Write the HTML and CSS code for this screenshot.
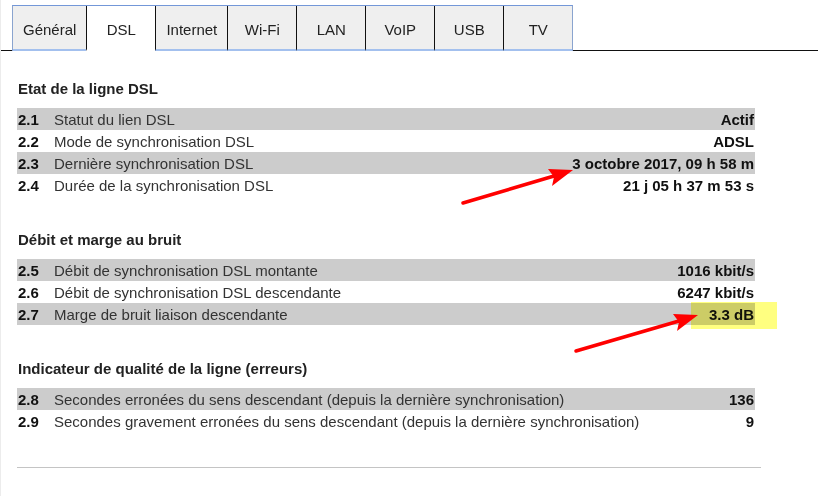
FILE: index.html
```html
<!DOCTYPE html>
<html lang="fr">
<head>
<meta charset="utf-8">
<title>DSL</title>
<link rel="stylesheet" href="styles.css">
</head>
<body>
<div class="page">
  <nav class="tabs">
    <div class="tab-gap left"></div>
    <div class="tab-strip">
      <div class="tab">Général</div>
      <div class="tab active">DSL</div>
      <div class="tab">Internet</div>
      <div class="tab">Wi-Fi</div>
      <div class="tab">LAN</div>
      <div class="tab">VoIP</div>
      <div class="tab">USB</div>
      <div class="tab">TV</div>
    </div>
    <div class="tab-gap right"></div>
  </nav>

  <main class="content">
    <section class="group">
      <h2 class="group-title">Etat de la ligne DSL</h2>
      <div class="row odd"><span class="num">2.1</span><span class="label">Statut du lien DSL</span><span class="value">Actif</span></div>
      <div class="row"><span class="num">2.2</span><span class="label">Mode de synchronisation DSL</span><span class="value">ADSL</span></div>
      <div class="row odd"><span class="num">2.3</span><span class="label">Dernière synchronisation DSL</span><span class="value">3 octobre 2017, 09 h 58 m</span></div>
      <div class="row"><span class="num">2.4</span><span class="label">Durée de la synchronisation DSL</span><span class="value">21 j 05 h 37 m 53 s</span></div>
    </section>

    <section class="group">
      <h2 class="group-title">Débit et marge au bruit</h2>
      <div class="row odd"><span class="num">2.5</span><span class="label">Débit de synchronisation DSL montante</span><span class="value">1016 kbit/s</span></div>
      <div class="row"><span class="num">2.6</span><span class="label">Débit de synchronisation DSL descendante</span><span class="value">6247 kbit/s</span></div>
      <div class="row odd"><span class="num">2.7</span><span class="label">Marge de bruit liaison descendante</span><span class="value">3.3 dB</span></div>
    </section>

    <section class="group">
      <h2 class="group-title">Indicateur de qualité de la ligne (erreurs)</h2>
      <div class="row odd"><span class="num">2.8</span><span class="label">Secondes erronées du sens descendant (depuis la dernière synchronisation)</span><span class="value">136</span></div>
      <div class="row"><span class="num">2.9</span><span class="label">Secondes gravement erronées du sens descendant (depuis la dernière synchronisation)</span><span class="value">9</span></div>
    </section>

    <hr class="rule">
  </main>

  <div class="highlight"></div>

  <svg class="arrows" width="818" height="496" viewBox="0 0 818 496">
    <line x1="462" y1="203" x2="553" y2="176" stroke="#ff0000" stroke-width="3.5" stroke-linecap="round"/>
    <polygon points="572,170 551,186 553,177 547,169" fill="#ff0000"/>
    <line x1="575" y1="351" x2="678" y2="321" stroke="#ff0000" stroke-width="3.5" stroke-linecap="round"/>
    <polygon points="697,315 676,331 678,322 672,314" fill="#ff0000"/>
  </svg>
</div>
</body>
</html>
```

FILE: styles.css
```css
* { box-sizing: border-box; }

html, body {
  margin: 0;
  padding: 0;
  background: #ffffff;
}

body {
  font-family: "Liberation Sans", Arial, sans-serif;
  font-size: 15px;
  color: #333333;
}

.page {
  position: relative;
  width: 818px;
  height: 496px;
  overflow: hidden;
  border-left: 1px solid #ececec;
}

/* Tabs */
.tabs {
  display: flex;
  align-items: flex-end;
  padding-top: 5px;
}

.tab-gap {
  height: 1px;
  border-bottom: 1px solid #111111;
  margin-bottom: 0;
}
.tab-gap.left { width: 11px; }
.tab-gap.right { flex: 1; }

.tab-strip {
  display: flex;
  border-top: 1px solid #7397d8;
  border-left: 1px solid #8aa4cf;
  border-right: 1px solid #8aa4cf;
}

.tab {
  min-width: 69px;
  height: 45px;
  padding: 4px 10px 0;
  display: flex;
  align-items: center;
  justify-content: center;
  background: #efefef;
  color: #222222;
  border-left: 1px solid #111111;
  border-bottom: 2px solid #a3c0ee;
  font-size: 15px;
}
.tab:first-child {
  border-left: none;
  min-width: 73px;
}
.tab.active {
  background: #ffffff;
  border-bottom-color: #ffffff;
}

/* Content */
.content {
  padding: 27px 0 0 16px;
  width: 760px;
}

.group {
  width: 738px;
  margin-bottom: 33px;
}

.group-title {
  margin: 0 0 8px;
  height: 22px;
  line-height: 22px;
  font-size: 15px;
  font-weight: bold;
  color: #222222;
  padding-left: 1px;
}

.row {
  display: flex;
  align-items: center;
  height: 22px;
  padding: 0 1px;
}
.row.odd { background: #cccccc; }

.num {
  width: 36px;
  font-weight: bold;
  color: #111111;
  flex: none;
}

.label {
  flex: 1;
  color: #333333;
  white-space: nowrap;
}

.value {
  font-weight: bold;
  color: #111111;
  white-space: nowrap;
}

.rule {
  margin: 35px 0 0;
  width: 744px;
  border: none;
  border-top: 1px solid #c4c4c4;
  height: 0;
}

/* Overlays */
.highlight {
  position: absolute;
  left: 690px;
  top: 302px;
  width: 86px;
  height: 27px;
  background: #ffff80;
  mix-blend-mode: multiply;
}

.arrows {
  position: absolute;
  left: 0;
  top: 0;
  pointer-events: none;
}
```
